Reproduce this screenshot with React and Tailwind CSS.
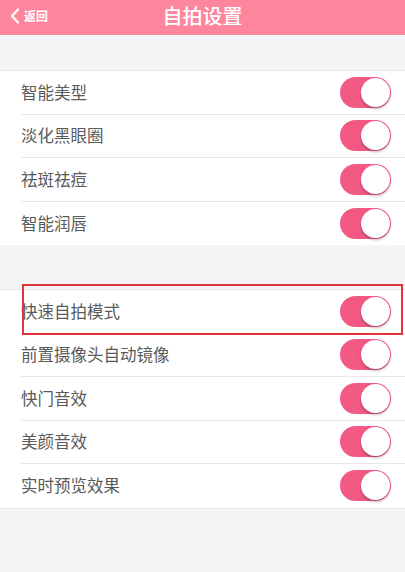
import React from "react";

const font = { fontFamily: '"Noto Sans CJK SC", "Noto Sans", sans-serif' };

function Toggle() {
  return (
    <div className="relative h-[31px] w-[51px] shrink-0 rounded-full bg-[#f25a84]">
      <div className="absolute right-[1px] top-[1px] h-[29px] w-[29px] rounded-full bg-white shadow-[0_2px_3px_rgba(0,0,0,0.25)]" />
    </div>
  );
}

function Row({ label, last }) {
  return (
    <div className="flex h-[43.5px] items-center pl-[21px]">
      <div className={`flex h-full flex-1 items-center pr-[14px] ${last ? "" : "border-b border-[#e8e8ea]"}`}>
        <span className="flex-1 text-[16.5px] text-[#5a5a5a]">{label}</span>
        <Toggle />
      </div>
    </div>
  );
}

export default function App() {
  const g1 = ["智能美型", "淡化黑眼圈", "祛斑祛痘", "智能润唇"];
  const g2 = ["快速自拍模式", "前置摄像头自动镜像", "快门音效", "美颜音效", "实时预览效果"];
  return (
    <div className="flex h-[572px] w-[405px] flex-col bg-[#f4f3f6]" style={font}>
      <div className="relative flex h-[35px] items-center justify-center bg-[#fd869d]">
        <div className="absolute left-[10px] top-0 flex h-full items-center gap-[4px] pb-[3px] text-white">
          <svg width="10" height="16" viewBox="0 0 10 16" fill="none">
            <path d="M8 1.5 L2 8 L8 14.5" stroke="white" strokeWidth="2.2" strokeLinecap="round" strokeLinejoin="round" />
          </svg>
          <span className="text-[12px] font-semibold leading-none">返回</span>
        </div>
        <span className="mt-[-4px] text-[20px] font-medium text-white">自拍设置</span>
      </div>
      <div className="h-[35px]" />
      <div className="border-t border-[#e8e8ea] bg-white">
        {g1.map((l, i) => (
          <Row key={l} label={l} last={i === g1.length - 1} />
        ))}
      </div>
      <div className="h-[44px]" />
      <div className="relative border-y border-[#e8e8ea] bg-white">
        {g2.map((l, i) => (
          <Row key={l} label={l} last={i === g2.length - 1} />
        ))}
        <div className="absolute left-[22px] top-[-6px] h-[51px] w-[381px] border-2 border-[#e2353a]" />
      </div>
    </div>
  );
}
